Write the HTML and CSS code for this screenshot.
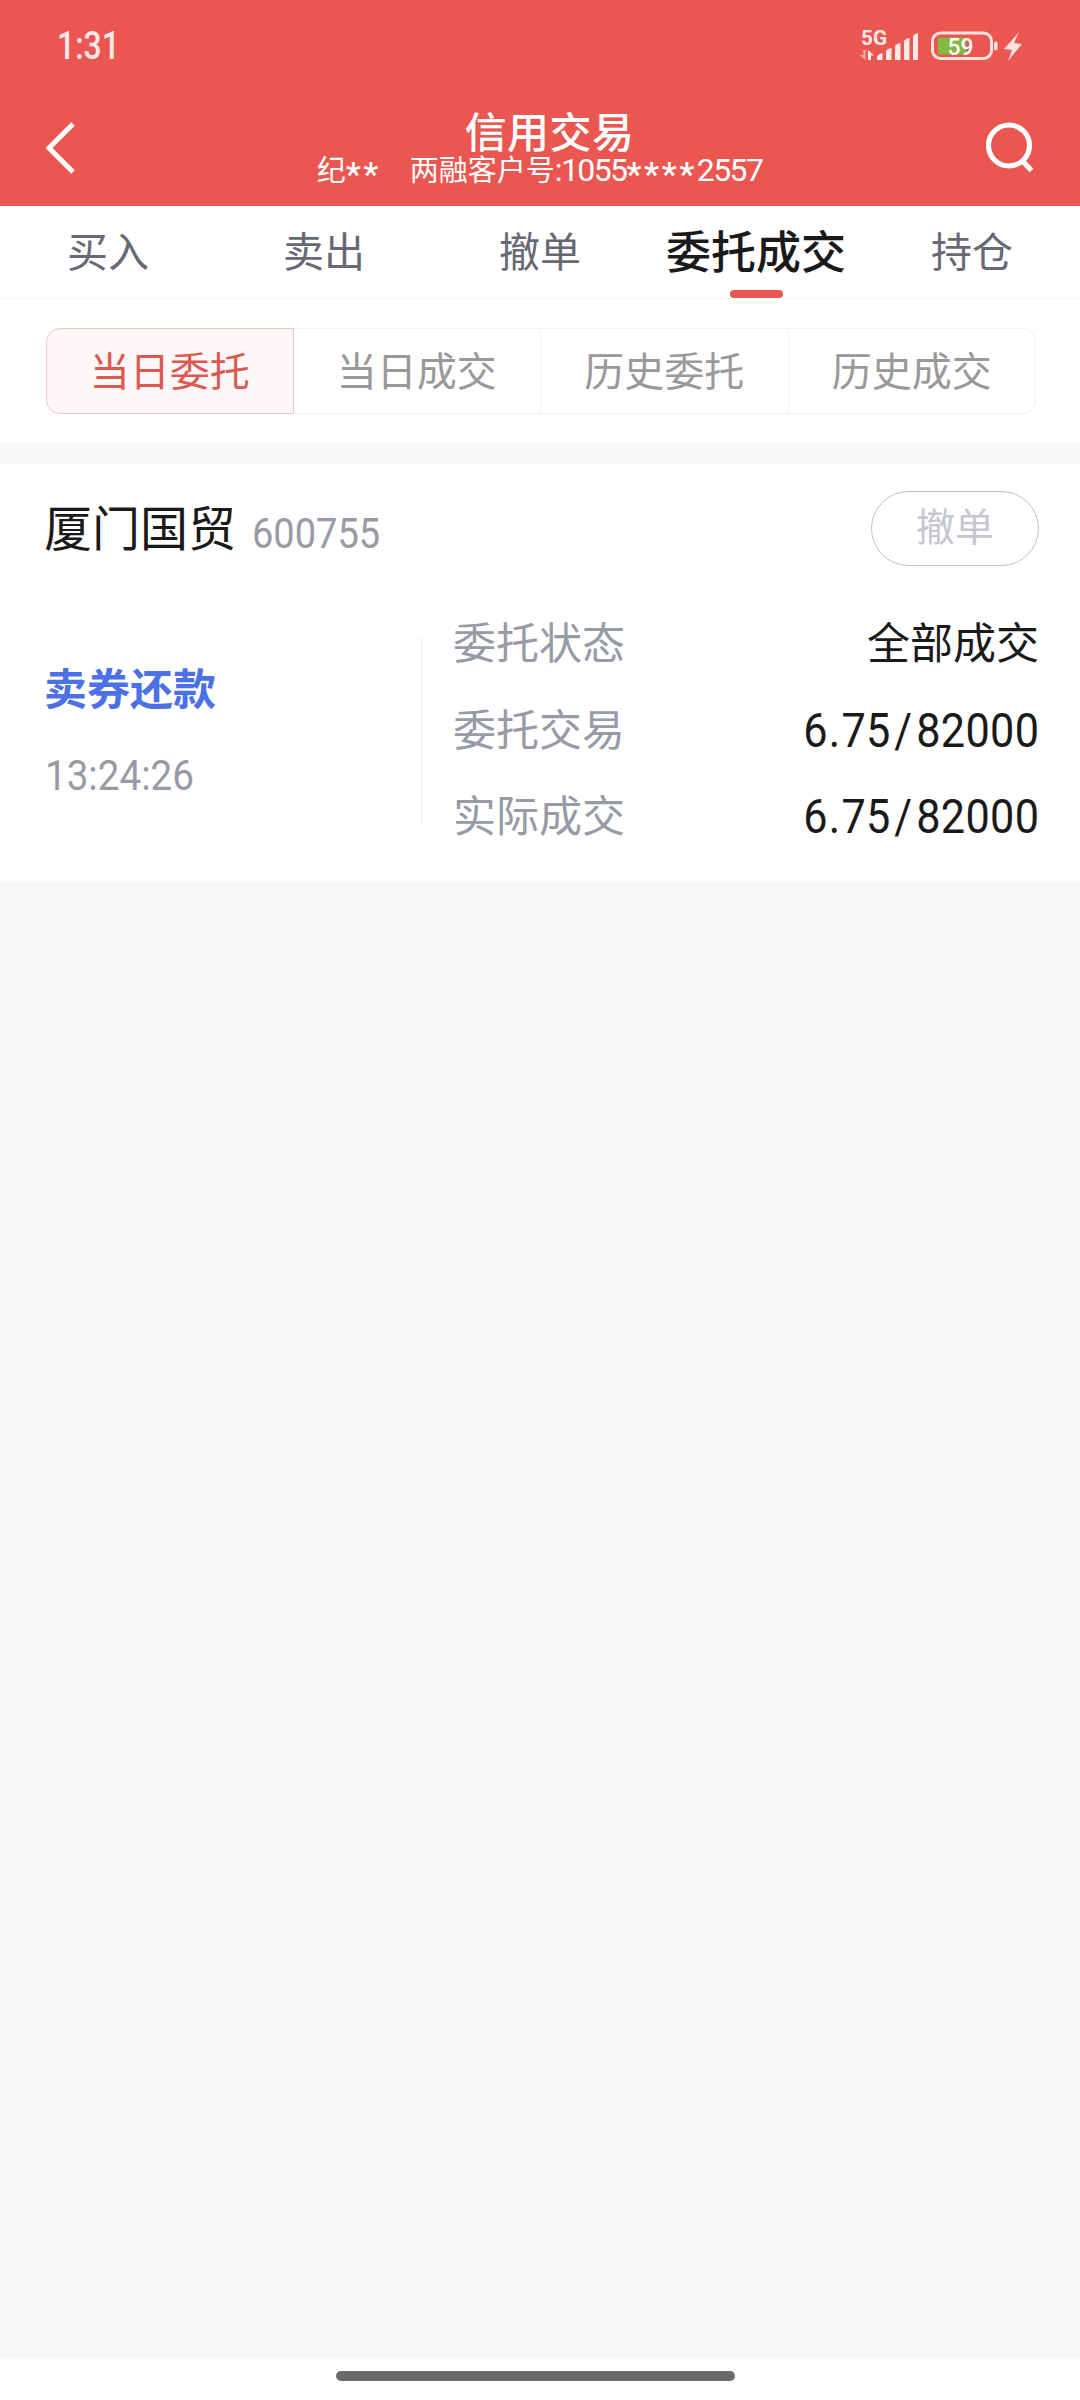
FILE: index.html
```html
<!DOCTYPE html>
<html lang="zh-CN">
<head>
    <meta charset="UTF-8">
    <meta name="viewport" content="width=device-width, initial-scale=1.0">
    <title>信用交易</title>
    <link rel="stylesheet" href="styles.css">
</head>
<body>
    <header class="header">
        <div class="status-bar">
            <span class="clock">1:31</span>
            <svg class="status-icons" width="170" height="52" viewBox="-4 -8 170 52">
                <text class="net" x="1" y="16.500" textLength="26" lengthAdjust="spacingAndGlyphs">5G</text>
                <!-- up / down traffic -->
                <path d="M5.500 22V32L0 27H3.500V22Z" fill="#ffb0ab"/>
                <path d="M8 32V22L14 27.500H11V32Z" fill="#ffe9e8"/>
                <!-- signal -->
                <g fill="#ffe9e8">
                    <path d="M17 32V29Q18 26 22.500 25V32Z"/>
                    <path d="M26 32V23Q27 21 31.500 20V32Z"/>
                    <path d="M35 32V18Q36 16 40.500 15V32Z"/>
                    <path d="M44 32V13Q45 11 49.500 10V32Z"/>
                    <path d="M53 32V8Q54 6 58 5V32Z"/>
                </g>
                <!-- battery -->
                <rect x="72.500" y="5" width="59" height="25.500" rx="8" fill="none" stroke="#ffe3e1" stroke-width="3"/>
                <path d="M80 9.500H106V26.500H80Q78 26.500 78 24.500V11.500Q78 9.500 80 9.500Z" fill="#82b941"/>
                <rect x="134" y="13.500" width="3.500" height="9" rx="1.700" fill="#ffe3e1"/>
                <text class="level" x="87.500" y="26.500" textLength="26" lengthAdjust="spacingAndGlyphs">59</text>
                <path d="M159 4L144 21L152 22L148 33L162 16L154 15Z" fill="#ffe0de"/>
            </svg>
        </div>
        <div class="nav-bar">
            <svg class="back" width="30" height="54" viewBox="0 0 30 54">
                <path d="M27 3L3 27L27 51" fill="none" stroke="#fff" stroke-width="5"/>
            </svg>
            <div class="titles">
                <h1>信用交易</h1>
                <p>纪<span class="stars">**</span><span class="account">两融客户号<span class="digits">:1055</span><span class="stars">****</span><span class="digits">2557</span></span></p>
            </div>
            <svg class="search" width="50" height="54" viewBox="0 0 50 54">
                <circle cx="24" cy="24.500" r="20.500" fill="none" stroke="#fff" stroke-width="5.200"/>
                <path d="M37 39.500L46.500 49.500" stroke="#fff" stroke-width="5.200"/>
            </svg>
        </div>
    </header>

    <nav class="tabs">
        <a class="tab">买入</a>
        <a class="tab">卖出</a>
        <a class="tab">撤单</a>
        <a class="tab active">委托成交</a>
        <a class="tab">持仓</a>
    </nav>

    <div class="filter">
        <div class="segments">
            <button class="segment selected">当日委托</button>
            <button class="segment">当日成交</button>
            <button class="segment">历史委托</button>
            <button class="segment">历史成交</button>
        </div>
    </div>

    <main class="list">
        <section class="order">
            <div class="order-head">
                <h2>厦门国贸</h2>
                <span class="code">600755</span>
                <button class="cancel">撤单</button>
            </div>
            <div class="order-body">
                <div class="side">
                    <span class="type">卖券还款</span>
                    <span class="time">13:24:26</span>
                </div>
                <dl class="details">
                    <div class="row">
                        <dt>委托状态</dt>
                        <dd>全部成交</dd>
                    </div>
                    <div class="row">
                        <dt>委托交易</dt>
                        <dd class="number">6<span class="dot">.</span>75<span class="slash">/</span>82000</dd>
                    </div>
                    <div class="row">
                        <dt>实际成交</dt>
                        <dd class="number">6<span class="dot">.</span>75<span class="slash">/</span>82000</dd>
                    </div>
                </dl>
            </div>
        </section>
    </main>

    <footer class="gesture-bar">
        <div class="handle"></div>
    </footer>
</body>
</html>
```
FILE: styles.css
```css
* {
    box-sizing: border-box;
    margin: 0;
    padding: 0;
}

body {
    display: flex;
    flex-direction: column;
    height: 2400px;
    background-color: #fff;
    font-family: Roboto, "Noto Sans CJK SC", sans-serif;
    color: #1a1a1a;
}

button {
    font-family: inherit;
    background: none;
    border: none;
}

/* header */
.header {
    height: 206px;
    background-color: #ea5751;
    color: #fff;
}

.status-bar {
    display: flex;
    justify-content: space-between;
    align-items: center;
    height: 92px;
    padding: 0 54px 0 57px;
}

.clock {
    font-size: 38px;
    font-weight: 500;
    line-height: 92px;
    transform: scaleX(0.84);
    transform-origin: left;
    color: #ffe9e8;
}

.net {
    font-family: Roboto, sans-serif;
    font-size: 21px;
    font-weight: 700;
    fill: #ffe9e8;
}

.level {
    font-family: Roboto, sans-serif;
    font-size: 23px;
    font-weight: 500;
    fill: #fff;
}

.nav-bar {
    display: flex;
    justify-content: space-between;
    height: 114px;
    padding: 0 46px;
}

.back,
.search {
    margin-top: 29px;
}

.search {
    margin-right: -1px;
}

.titles {
    display: flex;
    flex-direction: column;
    align-items: center;
    padding-top: 20px;
    padding-left: 18px;
}

.titles h1 {
    padding-left: 20px;
    font-size: 42px;
    font-weight: 500;
    line-height: 44px;
    letter-spacing: 0.4px;
}

.titles p {
    display: flex;
    font-size: 29px;
    line-height: 31px;
}

.account {
    display: flex;
    margin-left: 29px;
}

.digits {
    font-size: 32px;
    line-height: 29px;
    letter-spacing: -1.6px;
}

.stars {
    padding-top: 3px;
    font-size: 34px;
    font-weight: 500;
    letter-spacing: 2.5px;
}

/* tabs */
.tabs {
    display: grid;
    grid-template-columns: repeat(5, 1fr);
    height: 93px;
    border-bottom: 1px solid #f5f6f7;
}

.tab {
    display: flex;
    flex-direction: column;
    align-items: center;
    font-size: 41px;
    line-height: 95px;
    color: #666974;
}

.tab.active {
    font-size: 45px;
    font-weight: 500;
    color: #1a1a1a;
}

.tab.active::after {
    content: "";
    width: 53px;
    height: 8px;
    margin-top: -11px;
    border-radius: 4px;
    background-color: #e85751;
}

/* segments */
.filter {
    height: 144px;
    padding: 29px 44px 0 46px;
}

.segments {
    display: grid;
    grid-template-columns: repeat(4, 1fr);
    height: 86px;
}

.segment {
    padding-top: 3px;
    border: 1px solid #f0f2f4;
    border-left: none;
    font-size: 40px;
    line-height: 80px;
    color: #999;
}

.segment:last-child {
    border-radius: 0 14px 14px 0;
}

.segment.selected {
    border: 1px solid #efc6c5;
    border-radius: 14px 0 0 14px;
    background-color: #fdf8f7;
    color: #dd584f;
}

/* order list */
.list {
    flex: 1;
    padding-top: 21px;
    background-color: #f7f8fa;
}

.order {
    height: 418px;
    padding: 27px 41px 0 44px;
    background-color: #fff;
}

.order-head {
    display: flex;
    height: 76px;
}

.order-head h2 {
    font-size: 48px;
    font-weight: 400;
    line-height: 78px;
}

.code {
    margin-left: 16px;
    font-size: 42px;
    line-height: 85px;
    transform: scaleX(0.905);
    transform-origin: left;
    color: #969ba5;
}

.cancel {
    width: 168px;
    height: 75px;
    margin-left: auto;
    border: 1px solid #c0c0c3;
    border-radius: 38px;
    font-size: 39px;
    line-height: 71px;
    color: #c6c8cf;
}

.order-body {
    display: flex;
    margin-top: 34px;
}

.side {
    display: flex;
    flex-direction: column;
    width: 378px;
    height: 186px;
    margin-top: 36px;
    border-right: 1px solid #eceef0;
}

.type {
    font-size: 43px;
    font-weight: 700;
    line-height: 86px;
    margin-top: 10px;
    color: #4c70e6;
}

.time {
    padding-left: 1px;
    font-size: 42px;
    line-height: 85px;
    transform: scaleX(0.92);
    transform-origin: left;
    color: #969ba5;
}

.details {
    flex: 1;
    margin-left: 31px;
}

.row {
    display: flex;
    justify-content: space-between;
    height: 86.5px;
    line-height: 87px;
    font-size: 43px;
}

.row dt {
    color: #969ba5;
}

.row .number {
    font-size: 48px;
    line-height: 85px;
    letter-spacing: 0.4px;
    transform: scaleX(0.9);
    transform-origin: right;
}

.dot {
    margin: 0 1px;
}

.slash {
    margin: 0 4px;
}

/* gesture bar */
.gesture-bar {
    display: flex;
    justify-content: center;
    height: 42px;
    padding: 12.5px 9px 0 0;
    background-color: #fff;
}

.handle {
    width: 399px;
    height: 10px;
    border-radius: 5px;
    background-color: #6a6a6a;
}
```
